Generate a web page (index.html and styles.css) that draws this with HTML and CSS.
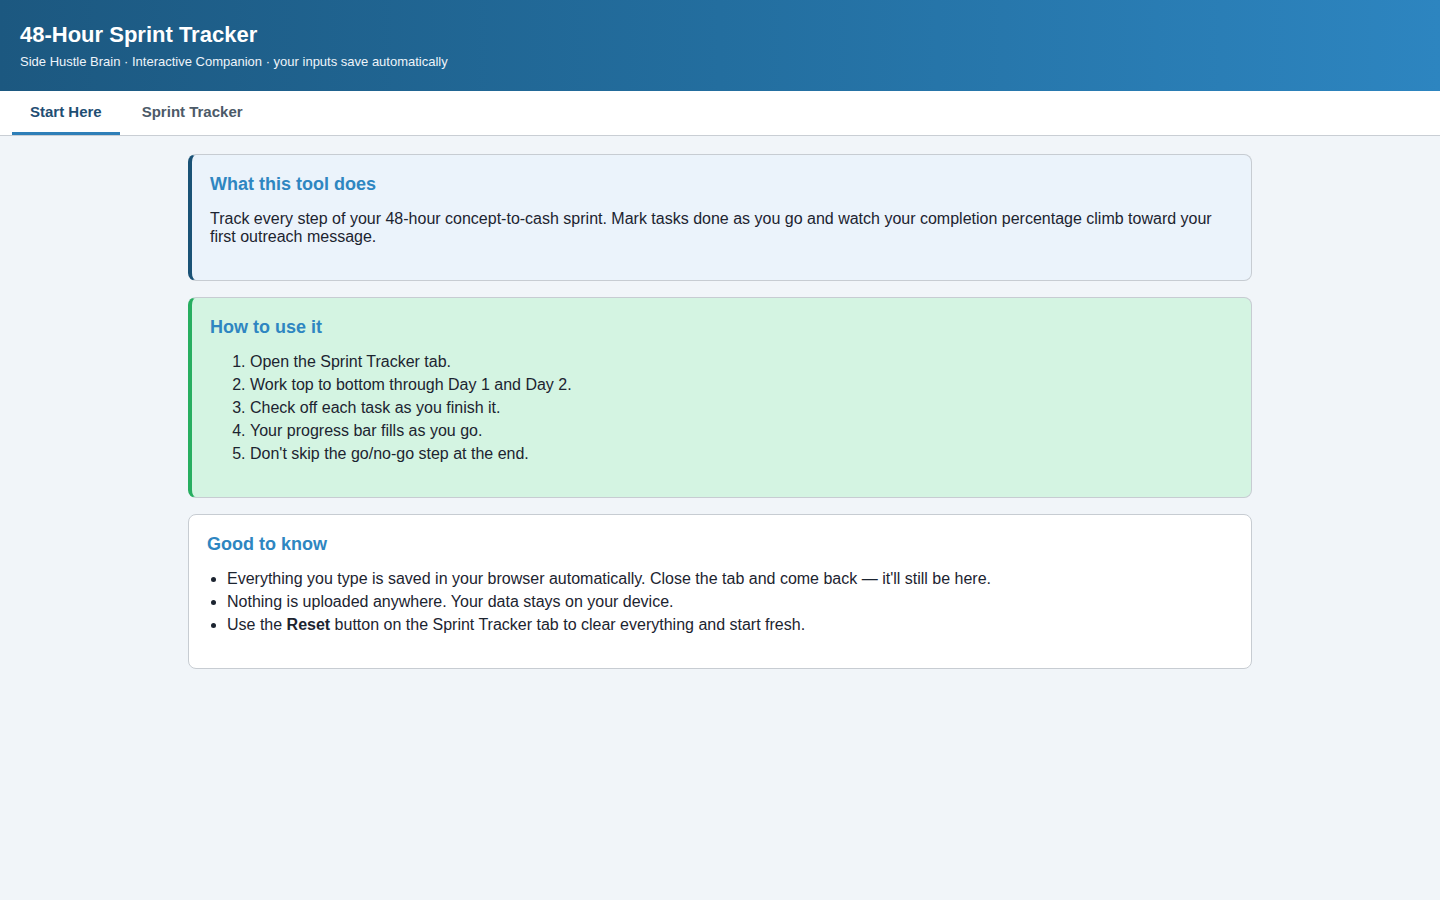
FILE: index.html
```html
<!DOCTYPE html>
<html lang="en">
<head>
<meta charset="utf-8">
<title>48-Hour Sprint Tracker</title>
<link rel="stylesheet" href="styles.css">
</head>
<body>
<header class="hero">
  <h1 class="hero-title">48-Hour Sprint Tracker</h1>
  <div class="hero-sub">Side Hustle Brain · Interactive Companion · your inputs save automatically</div>
</header>
<nav class="tabs">
  <button class="tab active">Start Here</button>
  <button class="tab">Sprint Tracker</button>
</nav>
<main class="content">
  <section class="card card-info">
    <h3 class="card-title">What this tool does</h3>
    <p class="card-text">Track every step of your 48-hour concept-to-cash sprint. Mark tasks done as you go and watch your completion percentage climb toward your first outreach message.</p>
  </section>
  <section class="card card-steps">
    <h3 class="card-title">How to use it</h3>
    <ol class="steps">
      <li>Open the Sprint Tracker tab.</li>
      <li>Work top to bottom through Day 1 and Day 2.</li>
      <li>Check off each task as you finish it.</li>
      <li>Your progress bar fills as you go.</li>
      <li>Don't skip the go/no-go step at the end.</li>
    </ol>
  </section>
  <section class="card card-plain">
    <h3 class="card-title">Good to know</h3>
    <ul class="notes">
      <li>Everything you type is saved in your browser automatically. Close the tab and come back — it'll still be here.</li>
      <li>Nothing is uploaded anywhere. Your data stays on your device.</li>
      <li>Use the <strong>Reset</strong> button on the Sprint Tracker tab to clear everything and start fresh.</li>
    </ul>
  </section>
</main>
</body>
</html>
```
FILE: styles.css
```css
* { box-sizing: border-box; }
html, body { margin: 0; padding: 0; }
body {
  font-family: "Liberation Sans", Arial, Helvetica, sans-serif;
  background: #f1f5f9;
  color: #1c2430;
  min-height: 100vh;
}
.hero {
  background: linear-gradient(90deg, #1c5880 0%, #236e9f 50%, #2d85c0 100%);
  color: #fff;
  padding: 22px 20px 22px;
  height: 91px;
}
.hero-title {
  margin: 0;
  font-size: 22px;
  line-height: 26px;
  font-weight: 700;
}
.hero-sub {
  margin-top: 6px;
  font-size: 13px;
  line-height: 15px;
  color: #eef4fa;
}
.tabs {
  display: flex;
  gap: 4px;
  background: #fff;
  padding: 0 12px;
  border-bottom: 1px solid #c9ced4;
  height: 45px;
}
.tab {
  font-family: inherit;
  font-size: 15px;
  font-weight: 700;
  color: #4c5a68;
  background: none;
  border: none;
  border-bottom: 3px solid transparent;
  padding: 0 18px;
  height: 44px;
  cursor: pointer;
}
.tab.active {
  color: #1f4e73;
  border-bottom-color: #2e7fb8;
}
.content {
  width: 1064px;
  margin: 18px auto 0;
  display: flex;
  flex-direction: column;
  gap: 16px;
}
.card {
  border: 1px solid #c7ccd2;
  border-radius: 8px;
  padding: 18px;
  background: #fff;
}
.card-info {
  background: #ebf3fb;
  border-left: 4px solid #1a5276;
}
.card-steps {
  background: #d4f4e2;
  border-left: 4px solid #27ae60;
}
.card-title {
  margin: 0;
  font-size: 18px;
  line-height: 22px;
  font-weight: 700;
  color: #2e86c1;
}
.card-text {
  margin: 15px 0 16px;
  font-size: 16px;
  line-height: 18px;
}
.steps, .notes {
  margin: 12px 0 14px;
  font-size: 16px;
}
.steps { padding-left: 40px; }
.notes { padding-left: 20px; }
.steps li, .notes li {
  line-height: 23px;
}
```
